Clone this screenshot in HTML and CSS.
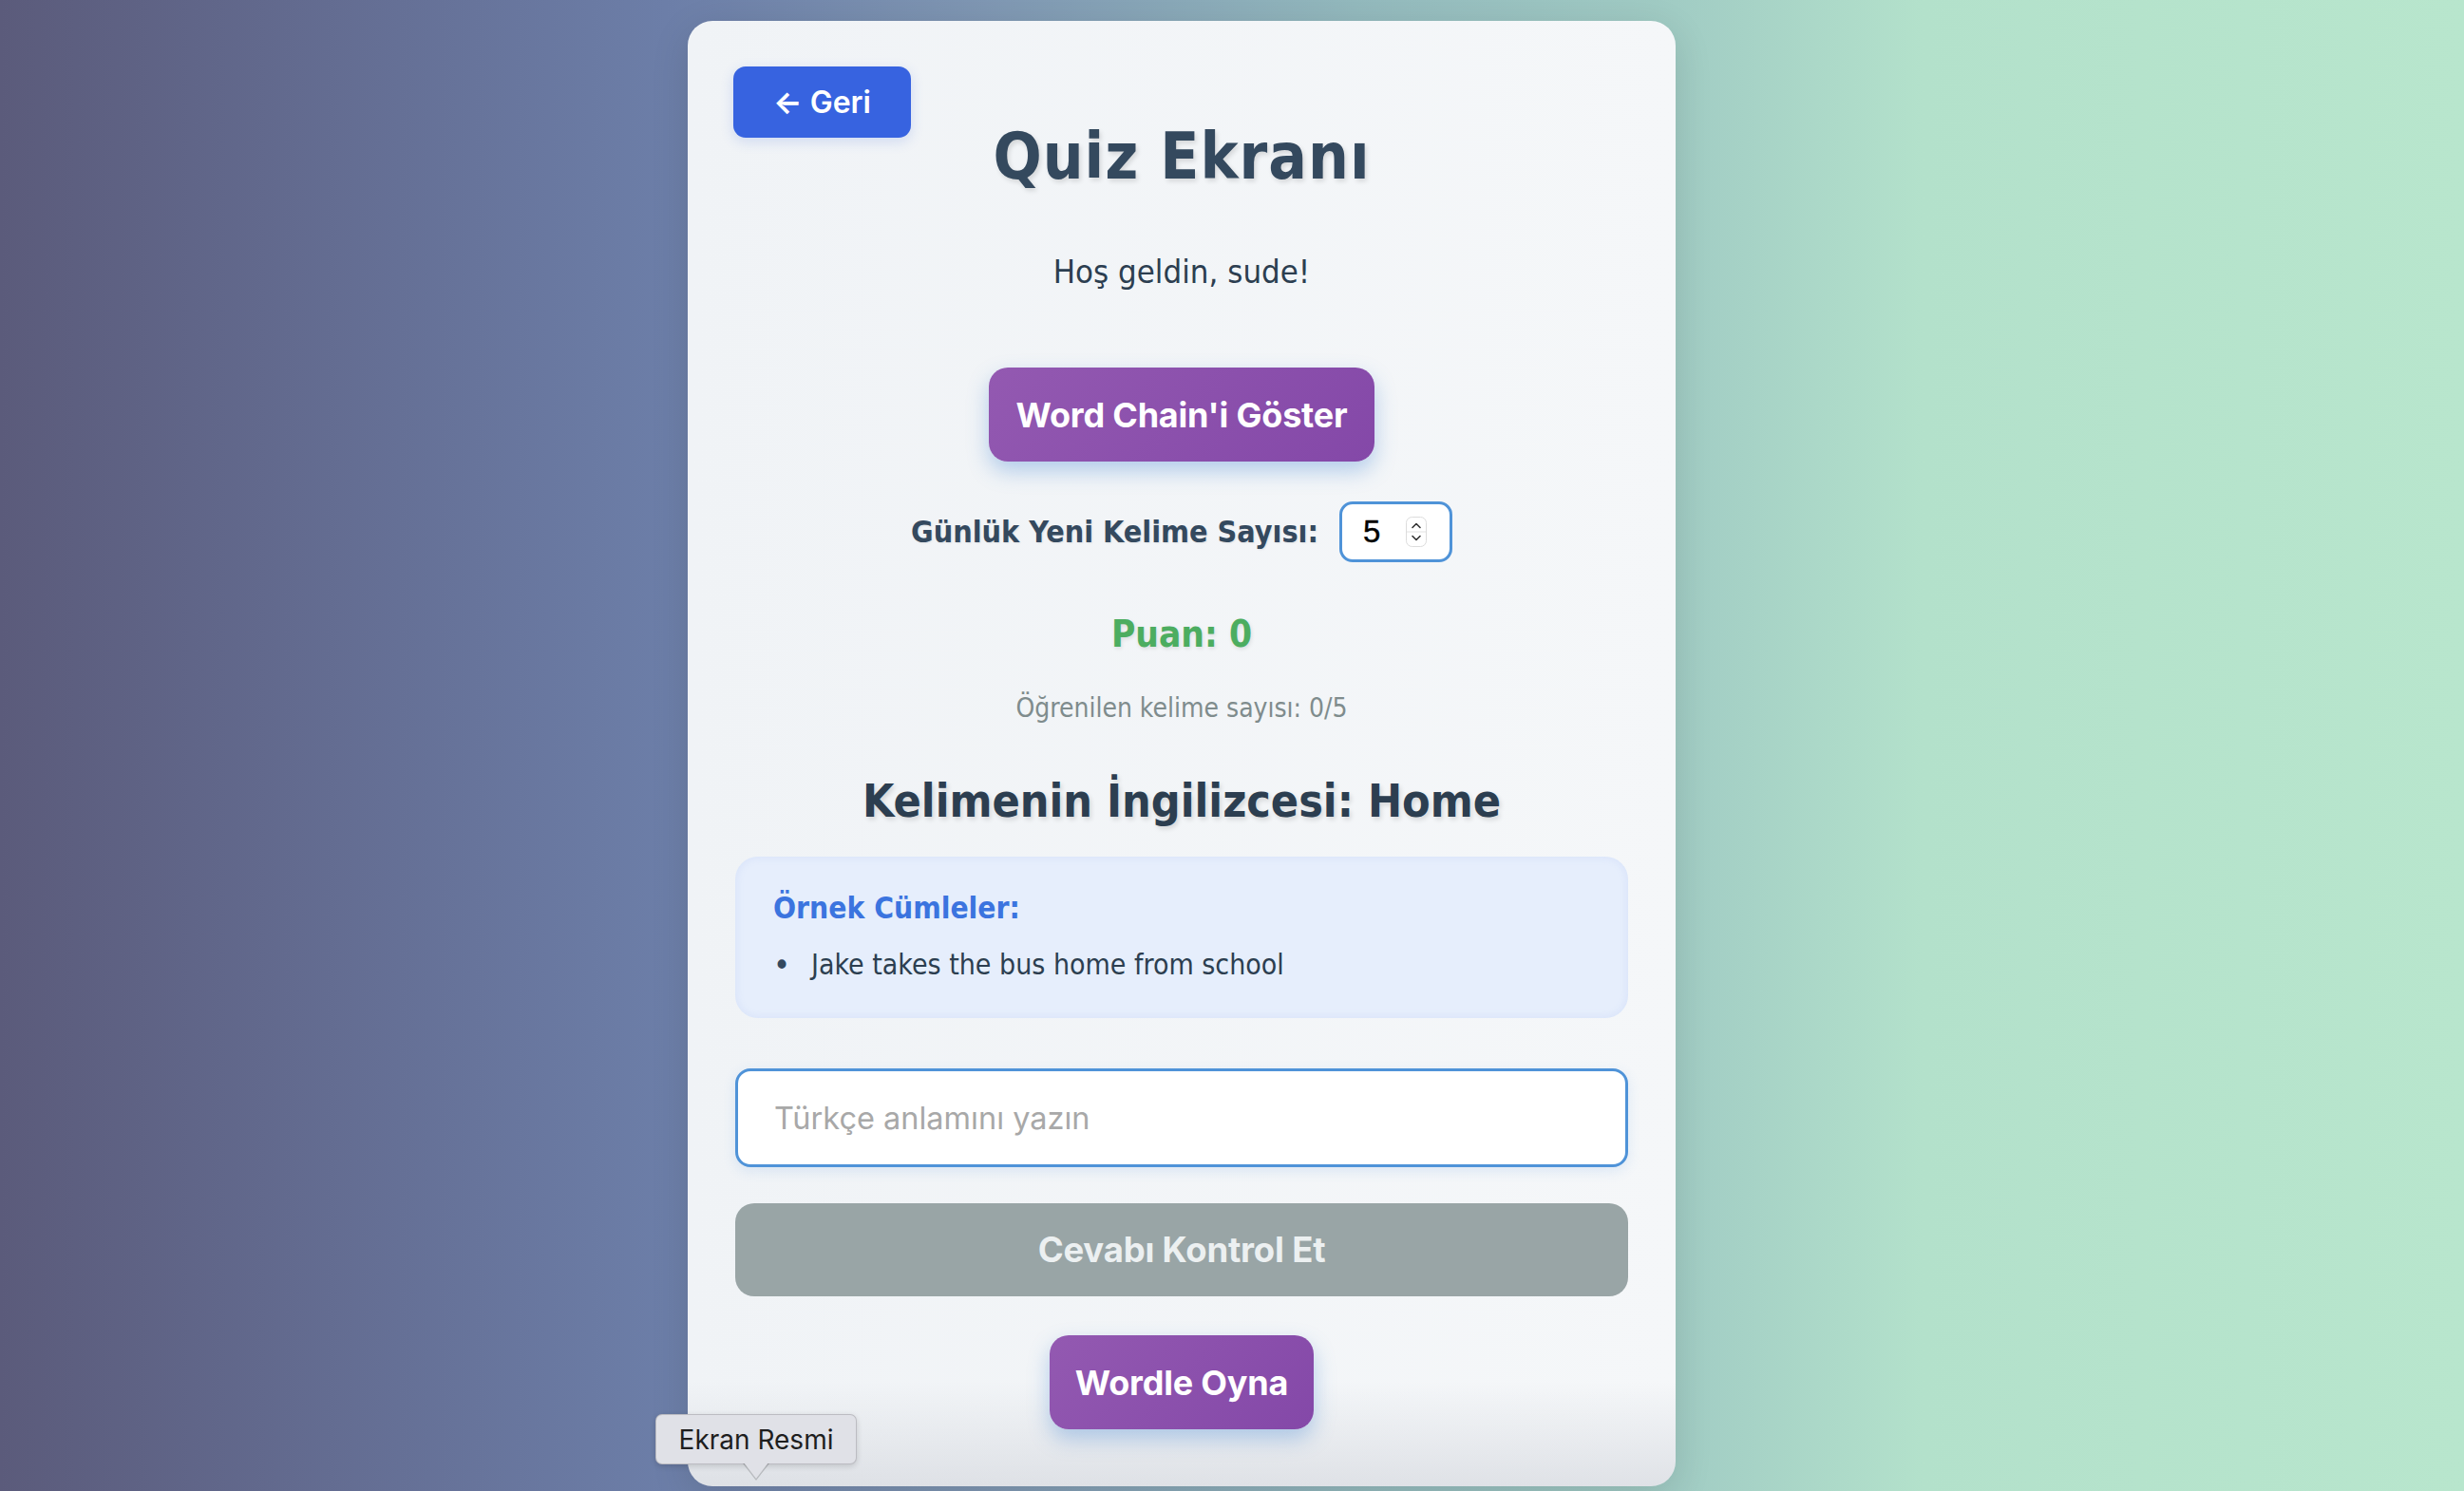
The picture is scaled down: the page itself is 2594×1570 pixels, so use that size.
FILE: index.html
```html
<!DOCTYPE html>
<html lang="tr">
<head>
<meta charset="utf-8">
<title>Quiz Ekranı</title>
<link rel="stylesheet" href="styles.css">
</head>
<body>
<div class="page">
  <main class="card">
    <button class="back-btn"><span class="arrow">←</span> Geri</button>
    <h1 class="title">Quiz Ekranı</h1>
    <p class="welcome">Hoş geldin, sude!</p>
    <button class="purple-btn">Word Chain'i Göster</button>
    <div class="daily-row">
      <label class="daily-label" for="daily">Günlük Yeni Kelime Sayısı:</label>
      <div class="num-box">
        <input id="daily" class="num-input" type="text" value="5">
        <svg class="spinner" width="22" height="32" viewBox="0 0 22 32">
          <rect x="0.5" y="0.5" width="21" height="31" rx="6" fill="#fff" stroke="#dcdcdc"/>
          <line x1="1" y1="16" x2="21" y2="16" stroke="#e2e2e2" stroke-width="1"/>
          <polyline points="7,11.5 11,7.5 15,11.5" fill="none" stroke="#333" stroke-width="1.6" stroke-linecap="round" stroke-linejoin="round"/>
          <polyline points="7,20.5 11,24.5 15,20.5" fill="none" stroke="#333" stroke-width="1.6" stroke-linecap="round" stroke-linejoin="round"/>
        </svg>
      </div>
    </div>
    <p class="score">Puan: 0</p>
    <p class="learned">Öğrenilen kelime sayısı: 0/5</p>
    <h2 class="word">Kelimenin İngilizcesi: Home</h2>
    <section class="examples">
      <h3 class="examples-title">Örnek Cümleler:</h3>
      <ul class="examples-list">
        <li>Jake takes the bus home from school</li>
      </ul>
    </section>
    <input class="answer" type="text" placeholder="Türkçe anlamını yazın">
    <button class="check-btn">Cevabı Kontrol Et</button>
    <button class="purple-btn wordle-btn">Wordle Oyna</button>
  </main>
</div>
<div class="tooltip">Ekran Resmi</div>
</body>
</html>
```

FILE: styles.css
```css
html, body {
  margin: 0;
  padding: 0;
  height: 100%;
}

body {
  overflow: hidden;
  font-family: "DejaVu Sans Condensed", "DejaVu Sans", sans-serif;
  font-stretch: condensed;
  color: #2c3e50;
  background: linear-gradient(90deg, #5b5b7b 0%, #6c7ea8 27%, #7f97b3 40%, #93b9bd 55%, #a1ccc4 68%, #b3e1cb 78%, #b8e6cd 100%);
  position: relative;
}

.page {
  display: flex;
  justify-content: center;
  align-items: flex-start;
  padding: 22px 106px 0 0;
}

.card {
  position: relative;
  box-sizing: border-box;
  width: 1040px;
  padding: 103px 50px 60px;
  border-radius: 26px;
  display: flex;
  flex-direction: column;
  align-items: center;
  background:
    linear-gradient(180deg, rgba(220, 222, 228, 0) calc(100% - 110px), rgba(214, 217, 223, 0.7) 100%),
    linear-gradient(90deg, #f0f3f6 0%, #f5f7f9 100%);
  box-shadow: 0 10px 40px rgba(0, 0, 0, 0.12);
}

.back-btn {
  position: absolute;
  top: 48px;
  left: 48px;
  width: 187px;
  height: 75px;
  border: none;
  border-radius: 13px;
  background: #3763e0;
  color: #fff;
  font-family: Inter, "Noto Sans", sans-serif;
  font-weight: 600;
  font-size: 32px;
  box-shadow: 0 4px 14px rgba(55, 99, 224, 0.18);
  padding: 0;
}

.back-btn .arrow {
  font-weight: 700;
}

.title {
  margin: 0;
  font-size: 67px;
  letter-spacing: 1px;
  line-height: 80px;
  font-weight: 700;
  color: #34495e;
  text-shadow: 2px 3px 5px rgba(0, 0, 0, 0.12);
}

.welcome {
  margin: 56px 0 0;
  font-size: 34.5px;
  line-height: 50px;
  color: #2c3e50;
}

.purple-btn {
  margin-top: 76px;
  height: 99px;
  padding: 0 29px;
  border: none;
  border-radius: 20px;
  background: linear-gradient(135deg, #9359b1 0%, #8448a8 100%);
  color: #fff;
  font-family: Inter, "Noto Sans", sans-serif;
  font-weight: 700;
  font-size: 36px;
  letter-spacing: -0.2px;
  box-shadow: 0 10px 22px rgba(60, 130, 210, 0.35);
}

.daily-row {
  margin-top: 42px;
  display: flex;
  align-items: center;
  gap: 22px;
}

.daily-label {
  font-size: 32px;
  font-weight: 700;
  line-height: 44px;
  color: #34495e;
  text-shadow: 1px 1px 2px rgba(0, 0, 0, 0.08);
}

.num-box {
  box-sizing: border-box;
  width: 119px;
  height: 64px;
  border: 3px solid #4f93d8;
  border-radius: 14px;
  background: #fff;
  display: flex;
  align-items: center;
  padding-left: 22px;
}

.num-input {
  width: 45px;
  border: none;
  outline: none;
  padding: 0;
  background: transparent;
  font-family: "Liberation Sans", Arial, sans-serif;
  font-size: 33px;
  color: #000;
  -webkit-text-stroke: 0.4px #000;
}

.spinner {
  display: block;
}

.score {
  margin: 51px 0 0;
  font-size: 38.5px;
  line-height: 50px;
  font-weight: 700;
  color: #4cad60;
  text-shadow: 1px 2px 4px rgba(0, 0, 0, 0.1);
}

.learned {
  margin: 31px 0 0;
  font-size: 28px;
  line-height: 44px;
  color: #7f8c8d;
}

.word {
  margin: 40px 0 0;
  font-size: 48px;
  line-height: 70px;
  font-weight: 700;
  color: #2c3e50;
  text-shadow: 2px 3px 5px rgba(0, 0, 0, 0.12);
}

.examples {
  align-self: stretch;
  box-sizing: border-box;
  height: 170px;
  margin-top: 24px;
  padding: 32px 40px 0;
  border-radius: 24px;
  background: #e6eefc;
  box-shadow: inset 0 0 10px rgba(110, 150, 235, 0.14);
}

.examples-title {
  margin: 0;
  font-size: 31.5px;
  line-height: 44px;
  font-weight: 700;
  color: #3b74df;
}

.examples-list {
  margin: 16px 0 0;
  padding: 0;
  list-style: none;
}

.examples-list li {
  display: flex;
  font-size: 30px;
  line-height: 44px;
  color: #2c3e50;
}

.examples-list li::before {
  content: "•";
  flex: none;
  width: 40px;
  font-size: 34px;
  color: #34495e;
}

.answer {
  align-self: stretch;
  box-sizing: border-box;
  height: 104px;
  margin-top: 53px;
  padding: 0 38px;
  border: 3px solid #4f93d8;
  border-radius: 16px;
  background: #fff;
  outline: none;
  font-family: Inter, "Noto Sans", sans-serif;
  font-size: 32.5px;
  color: #2c3e50;
  box-shadow: 0 4px 14px rgba(74, 144, 226, 0.14);
}

.answer::placeholder {
  color: #a8a8a8;
}

.check-btn {
  align-self: stretch;
  height: 98px;
  margin-top: 38px;
  border: none;
  border-radius: 20px;
  background: #99a5a6;
  color: #ecf0f1;
  font-family: Inter, "Noto Sans", sans-serif;
  font-weight: 700;
  font-size: 36.5px;
  letter-spacing: -0.2px;
}

.wordle-btn {
  margin-top: 41px;
  padding: 0 27px;
}

.tooltip {
  position: absolute;
  left: 690px;
  top: 1489px;
  box-sizing: border-box;
  width: 212px;
  height: 53px;
  display: flex;
  align-items: center;
  justify-content: center;
  border: 1px solid rgba(0, 0, 0, 0.16);
  border-radius: 7px;
  background: #e0e1e7;
  color: #1e1e1e;
  font-family: Inter, "Noto Sans", sans-serif;
  font-size: 28px;
  box-shadow: 0 2px 6px rgba(0, 0, 0, 0.15);
}

.tooltip::before {
  content: "";
  position: absolute;
  left: 91px;
  top: 51px;
  width: 28px;
  height: 18px;
  background: rgba(0, 0, 0, 0.18);
  clip-path: polygon(0 0, 100% 0, 50% 100%);
}

.tooltip::after {
  content: "";
  position: absolute;
  left: 92px;
  top: 50px;
  width: 26px;
  height: 17px;
  background: #e0e1e7;
  clip-path: polygon(0 0, 100% 0, 50% 100%);
}
```
